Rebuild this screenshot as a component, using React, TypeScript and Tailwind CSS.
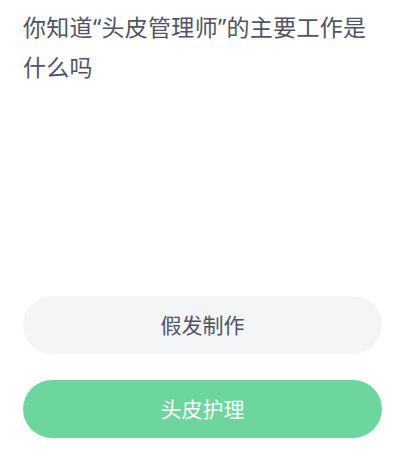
export default function App() {
  const q = { fontFamily: '"Noto Sans", "Open Sans", sans-serif' };
  return (
    <div
      className="w-[400px] h-[452px] bg-white overflow-hidden"
      style={{ fontFamily: '"Noto Sans CJK SC", "Noto Sans", sans-serif' }}
    >
      <div className="pl-[23px] pr-[20px] pt-[7px]">
        <p className="text-[23px] leading-[39px] tracking-[0.3px] text-[#4e5463]">
          你知道<span style={q}>“</span>头皮管理师<span style={q}>”</span>的主要工作是什么吗
        </p>
      </div>
      <div className="mt-[210px] ml-[23px] w-[359px] flex flex-col gap-[26px]">
        <div className="h-[58px] rounded-full bg-[#f4f5f7] flex items-center justify-center text-[21px] text-[#4e5463]">
          假发制作
        </div>
        <div className="h-[58px] rounded-full bg-[#6dd59e] flex items-center justify-center text-[21px] text-white">
          头皮护理
        </div>
      </div>
    </div>
  );
}
